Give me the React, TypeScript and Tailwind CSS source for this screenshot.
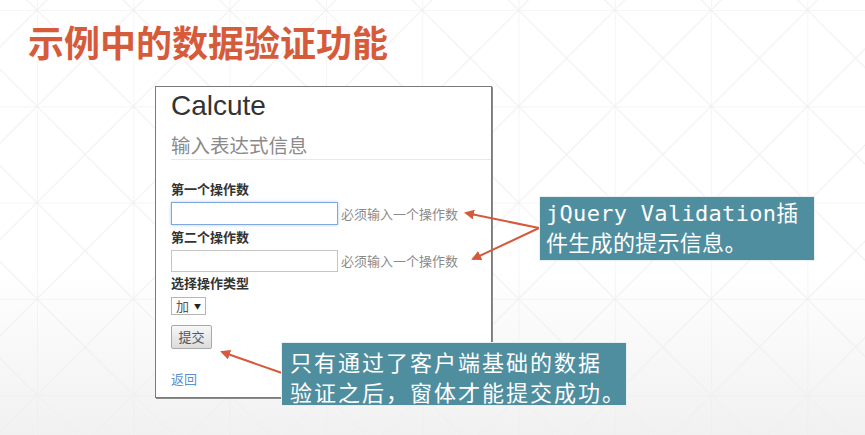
import React from "react";

const CJK = '"Noto Sans CJK SC", "Noto Sans", sans-serif';

function Background() {
  return (
    <svg className="absolute inset-0" width="865" height="435" xmlns="http://www.w3.org/2000/svg">
      <defs>
        <linearGradient id="bgGrad" x1="0" y1="0" x2="0" y2="1">
          <stop offset="0" stopColor="#ffffff" />
          <stop offset="0.62" stopColor="#ffffff" />
          <stop offset="1" stopColor="#f1f1f1" />
        </linearGradient>
        <pattern id="grid" patternUnits="userSpaceOnUse" x="37" y="10" width="96.3" height="96.3">
          <line x1="0" y1="0" x2="96.3" y2="0" stroke="#ececec" strokeWidth="1" />
          <line x1="0" y1="0" x2="0" y2="96.3" stroke="#ececec" strokeWidth="1" />
          <line x1="0" y1="0" x2="96.3" y2="96.3" stroke="#efefef" strokeWidth="1" />
          <line x1="96.3" y1="0" x2="0" y2="96.3" stroke="#efefef" strokeWidth="1" />
        </pattern>
      </defs>
      <rect width="865" height="435" fill="url(#bgGrad)" />
      <rect width="865" height="435" fill="url(#grid)" />
    </svg>
  );
}

function Arrows() {
  return (
    <svg className="absolute inset-0 pointer-events-none" width="865" height="435" xmlns="http://www.w3.org/2000/svg">
      <defs>
        <marker id="ah" viewBox="0 0 10 10" refX="8" refY="5" markerWidth="5" markerHeight="5" orient="auto-start-reverse">
          <path d="M0,0 L10,5 L0,10 z" fill="#d5593a" />
        </marker>
      </defs>
      <line x1="539" y1="228" x2="466" y2="213" stroke="#d5593a" strokeWidth="2" markerEnd="url(#ah)" />
      <line x1="539" y1="228" x2="473" y2="259" stroke="#d5593a" strokeWidth="2" markerEnd="url(#ah)" />
      <line x1="282" y1="373" x2="222" y2="352" stroke="#d5593a" strokeWidth="2" markerEnd="url(#ah)" />
    </svg>
  );
}

export default function App() {
  return (
    <div className="relative w-[865px] h-[435px] overflow-hidden bg-white">
      <Background />
      <div className="relative">
        <div
          className="pt-[23px] pl-[28px] text-[36px] leading-[36px] font-bold text-[#d65b3b]"
          style={{ fontFamily: CJK }}
        >
          示例中的数据验证功能
        </div>

        <div className="ml-[155px] mt-[27px] w-[337px] h-[312px] bg-white border border-[#7a7a7a] shadow-[1px_1px_0_#8a8a8a] pl-[15px]">
          <div
            className="mt-[3px] text-[28px] leading-[32px] text-[#333]"
            style={{ fontFamily: '"Liberation Sans", Arial, sans-serif' }}
          >
            Calcute
          </div>
          <div
            className="mt-[9px] h-[29px] text-[19.5px] leading-[28px] text-[#8a8a8a] border-b border-[#e8e8e8]"
            style={{ fontFamily: CJK }}
          >
            输入表达式信息
          </div>

          <div style={{ fontFamily: CJK }} className="text-[#333]">
            <div className="mt-[21px] text-[13px] leading-[16px] font-semibold">第一个操作数</div>
            <div className="mt-[5px] flex items-center gap-[3px]">
              <div className="w-[167px] h-[23px] bg-white border border-[#7fa8e0] shadow-[0_0_3px_rgba(102,160,233,0.5)]" />
              <span className="text-[13px] leading-[16px] text-[#8a8a8a]">必须输入一个操作数</span>
            </div>
            <div className="mt-[4px] text-[13px] leading-[16px] font-semibold">第二个操作数</div>
            <div className="mt-[5px] flex items-center gap-[3px]">
              <div className="w-[167px] h-[22px] bg-white border border-[#c4c4c4]" />
              <span className="text-[13px] leading-[16px] text-[#8a8a8a]">必须输入一个操作数</span>
            </div>
            <div className="mt-[3px] text-[13px] leading-[16px] font-semibold">选择操作类型</div>
            <div className="mt-[6px] w-[35px] h-[18px] border border-[#b5b5b5] bg-white flex items-center pl-[4px] gap-[5px]">
              <span className="text-[13px] leading-[16px] text-[#555]">加</span>
              <span className="text-[7px] leading-[8px] text-[#222]">▼</span>
            </div>
            <div className="mt-[10px] w-[41px] h-[24px] rounded-[2px] border border-[#a9a9a9] bg-gradient-to-b from-[#f7f7f7] to-[#dcdcdc] flex items-center justify-center">
              <span className="text-[13px] leading-[16px] text-[#555]">提交</span>
            </div>
            <div className="mt-[22px] text-[13px] leading-[16px] text-[#5b8fcf]">返回</div>
          </div>
        </div>
      </div>

      <Arrows />

      <div
        className="absolute left-[539px] top-[196px] w-[276px] h-[65px] bg-[#4f8e9f] border border-[#e8f0f2] text-white pl-[6px] pt-[2px] text-[22px] leading-[30px] tracking-[0.3px]"
        style={{ fontFamily: '"DejaVu Sans Mono", "Noto Sans CJK SC", monospace' }}
      >
        <div>jQuery Validation插</div>
        <div>件生成的提示信息。</div>
      </div>

      <div
        className="absolute left-[281px] top-[342px] w-[346px] h-[64px] bg-[#4f8e9f] border border-[#e8f0f2] text-white pl-[8px] pt-[3px] text-[22px] leading-[30px] tracking-[2px]"
        style={{ fontFamily: CJK }}
      >
        <div>只有通过了客户端基础的数据</div>
        <div>验证之后，窗体才能提交成功。</div>
      </div>
    </div>
  );
}
